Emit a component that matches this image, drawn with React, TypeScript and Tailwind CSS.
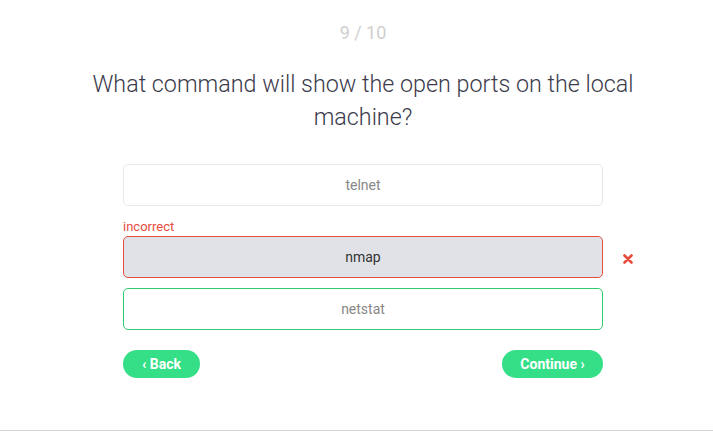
const Option = ({ label, className }: { label: string; className: string }) => (
  <div className={`h-[42px] flex items-center justify-center rounded-[5px] border text-[14px] ${className}`}>{label}</div>
);

const App = () => (
  <div className="h-[431px] border-b border-[#d4d4d4] bg-white pl-[13px] font-['Roboto',sans-serif]">
    <div className="flex flex-col items-center pt-[20px]">
      <div className="text-[18px] leading-[26px] text-[#cfcfcf]">9 / 10</div>
      <h1 className="mt-[22px] w-[580px] text-center text-[23.3px] font-light leading-[33px] text-[#3b3b4b]">
        What command will show the open ports on the local machine?
      </h1>
      <div className="mt-[30px] w-[480px]">
        <Option label="telnet" className="border-[#e8e8e8] text-[#888]" />
        <div className="relative mt-[12px]">
          <div className="text-[13px] leading-[18px] text-[#e84c3d]">incorrect</div>
          <Option label="nmap" className="border-[#e84c3d] bg-[#e1e2e7] text-[#333]" />
          <svg className="absolute right-[-30px] top-[36px]" width="10" height="10" viewBox="0 0 10 10">
            <path d="M1.5 1.5 L8.5 8.5 M8.5 1.5 L1.5 8.5" stroke="#e84c3d" strokeWidth="2.6" strokeLinecap="round" />
          </svg>
        </div>
        <Option label="netstat" className="mt-[10px] border-[#2ecc71] text-[#888]" />
        <div className="mt-[20px] flex justify-between">
          <button className="h-[28px] w-[77px] rounded-full bg-[#34df88] text-[14px] font-bold text-white">‹ Back</button>
          <button className="h-[28px] w-[101px] rounded-full bg-[#34df88] text-[14px] font-bold text-white">Continue ›</button>
        </div>
      </div>
    </div>
  </div>
);

export default App;
